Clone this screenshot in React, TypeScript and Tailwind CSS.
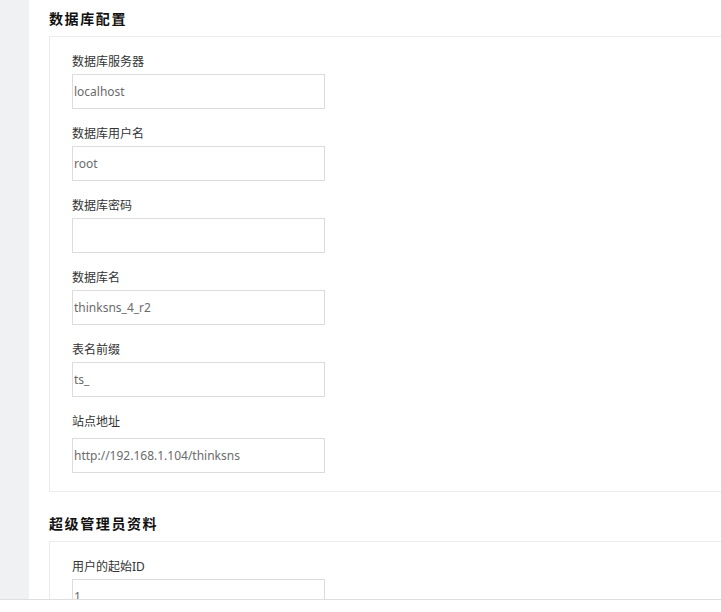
const dbFields = [
  { label: '数据库服务器', value: 'localhost' },
  { label: '数据库用户名', value: 'root' },
  { label: '数据库密码', value: '', type: 'password' },
  { label: '数据库名', value: 'thinksns_4_r2' },
  { label: '表名前缀', value: 'ts_' },
  { label: '站点地址', value: 'http://192.168.1.104/thinksns', wide: true },
];

const adminFields = [{ label: '用户的起始ID', value: '1' }];

type Field = { label: string; value: string; type?: string; wide?: boolean };

function FormField({ field, last }: { field: Field; last: boolean }) {
  return (
    <div className={last ? '' : 'mb-[15px]'}>
      <label
        className={`block h-[18px] pt-[1px] text-[12px] leading-[18px] text-[#333] ${field.wide ? 'mb-[8px]' : 'mb-[4px]'}`}
      >
        {field.label}
      </label>
      <input
        type={field.type ?? 'text'}
        defaultValue={field.value}
        readOnly
        className="block h-[35px] w-[253px] border border-[#dcdcdc] bg-white pl-[1px] text-[12px] text-[#6b6b6b] outline-none"
      />
    </div>
  );
}

function Section({ title, fields }: { title: string; fields: Field[] }) {
  return (
    <section>
      <h2 className="flex h-[36px] items-center text-[14px] font-bold tracking-[1.6px] text-[#111]">
        {title}
      </h2>
      <div className="mb-[13px] w-[720px] border border-[#ebebeb] bg-white pb-[18px] pl-[22px] pt-[15px]">
        {fields.map((f, i) => (
          <FormField key={f.label} field={f} last={i === fields.length - 1} />
        ))}
      </div>
    </section>
  );
}

export default function App() {
  return (
    <div
      className="flex h-[612px] w-full flex-col overflow-hidden bg-white"
      style={{ fontFamily: '"Noto Sans", "Noto Sans CJK SC", sans-serif' }}
    >
      <div className="flex min-h-0 flex-1 overflow-hidden">
        <aside className="w-[29px] shrink-0 bg-[#f0f1f3]" />
        <main className="min-w-0 flex-1 overflow-hidden bg-white pl-[20px]">
          <Section title="数据库配置" fields={dbFields} />
          <Section title="超级管理员资料" fields={adminFields} />
        </main>
      </div>
      <div className="h-[13px] shrink-0 border-t border-[#dedede] bg-white" />
    </div>
  );
}
